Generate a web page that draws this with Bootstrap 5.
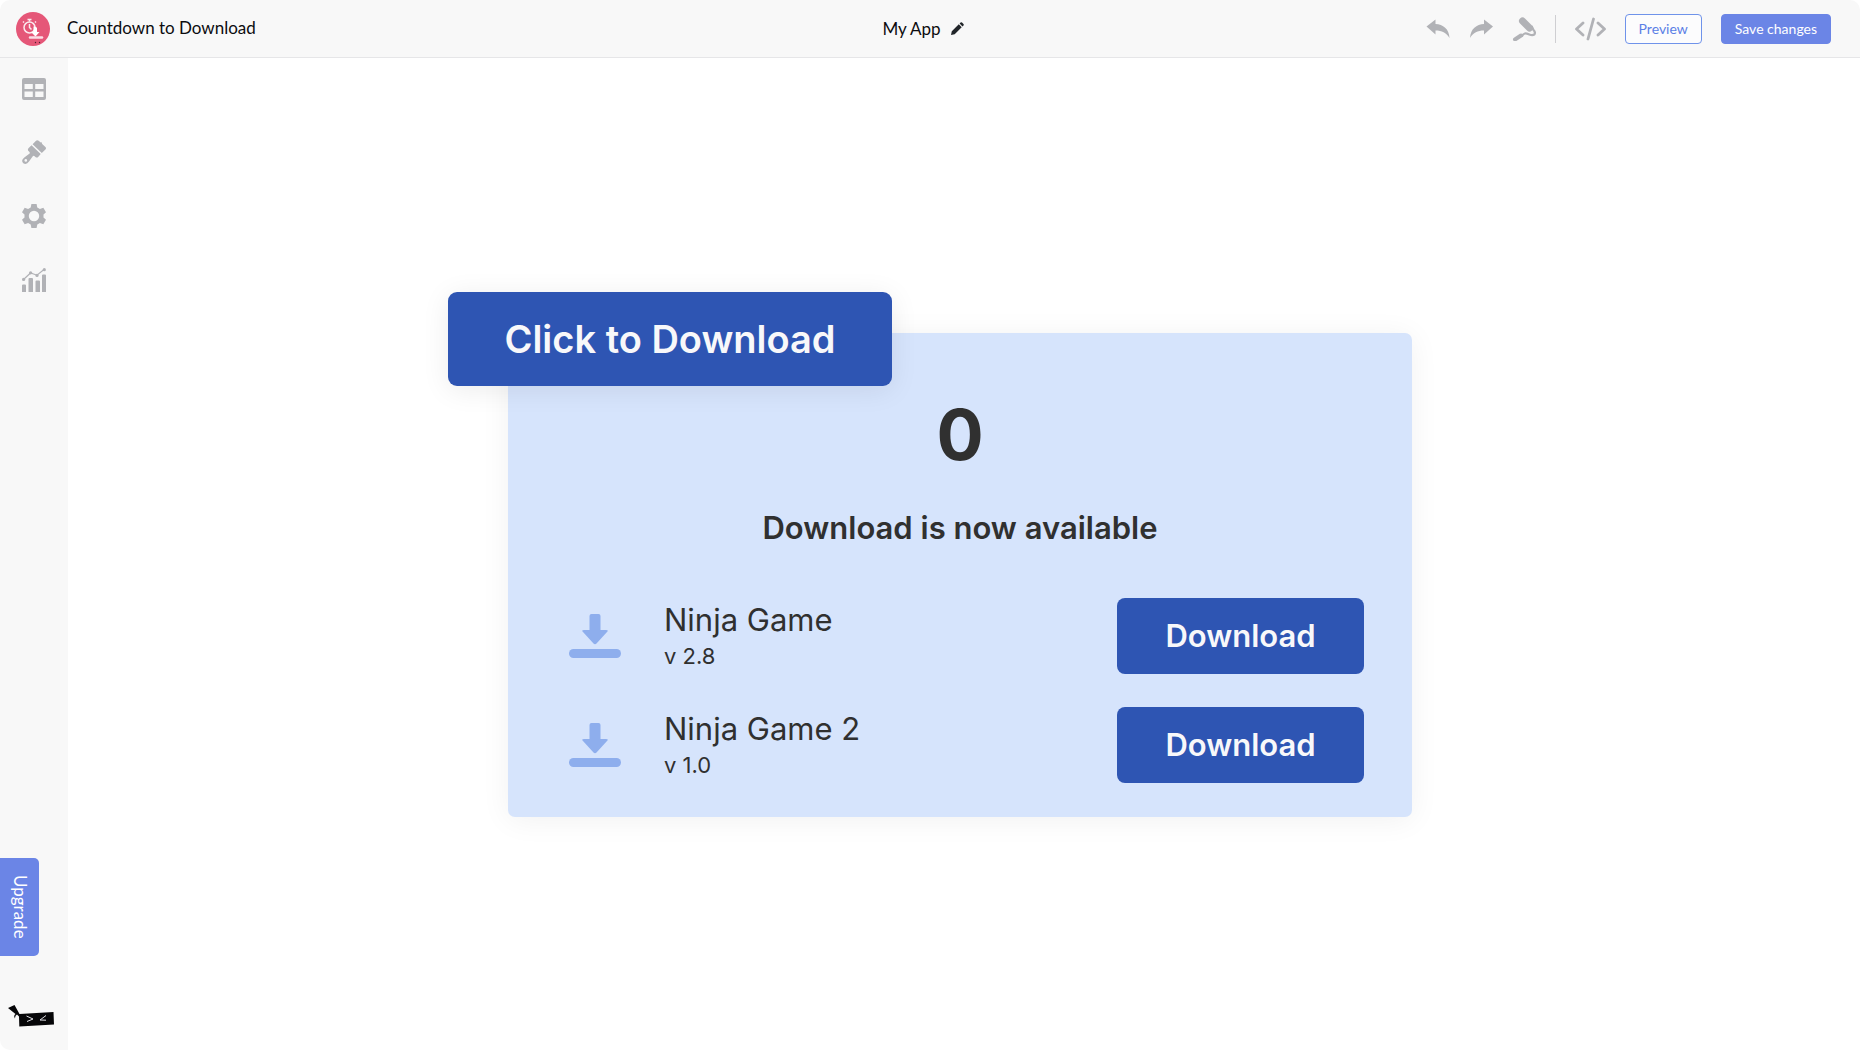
<!DOCTYPE html>
<html lang="en">
<head>
<meta charset="utf-8">
<meta name="viewport" content="width=device-width, initial-scale=1">
<title>Countdown to Download</title>
<link href="https://cdn.jsdelivr.net/npm/bootstrap@5.3.0/dist/css/bootstrap.min.css" rel="stylesheet">
<style>
  body { font-family: Lato, "Liberation Sans", sans-serif; color: #0c0c0f; background: #fff; }
  .editor { border-radius: 10px; overflow: hidden; }
  .topbar { background: #f8f8f8; border-bottom: 1px solid #e6e6e8; height: 58px; padding: 0 16px; }
  .topbar-side { flex: 1 1 0; }
  .tools { gap: 19px; padding-right: 13px; }
  .brand-text, .app-name { font-size: 17px; line-height: 24px; }
  .brand-text { margin-left: 17px; padding-bottom: 2px; }
  .app-name { padding-top: 1px; }
  .tool-btn { border: 0; background: none; padding: 0; color: #b1b2b6; line-height: 0; }
  .tool-btn svg { display: block; }
  .tool-line { width: 1px; height: 28px; background: #cfcfd2; }
  .top-action { --bs-btn-font-size: 14px; --bs-btn-line-height: 20px; --bs-btn-padding-y: 4px; --bs-btn-border-radius: 4px;
    --bs-btn-color: #5b7fe6; --bs-btn-border-color: #6f93ea; --bs-btn-bg: #fcfcfd; --bs-btn-hover-bg: #eef2fd; --bs-btn-hover-color: #5b7fe6; --bs-btn-padding-x: 13px; }
  .top-action-fill { --bs-btn-color: #fff; --bs-btn-bg: #6b85e6; --bs-btn-border-color: #6b85e6; --bs-btn-hover-bg: #5b76dc; --bs-btn-hover-color: #fff; }
  .sidebar { width: 68px; background: #f8f8f8; padding-top: 18px; }
  .upgrade { border: 0; background: #6b85e6; color: #fff; writing-mode: vertical-rl; font-size: 17px; line-height: 38px; padding: 17px 0; width: 39px; border-radius: 0 5px 5px 0; }
  .side-foot { gap: 49px; padding-bottom: 21px; }
  .stage { padding: 0 68px 0 0; }
  .widget { font-family: Inter, "Liberation Sans", sans-serif; width: 964px; max-width: 100%; color: #303030; }
  .cta { background: #2e55b3; color: #f8f8fa; border: 0; border-radius: 9px; width: 444px; height: 94px; font-size: 38px; font-weight: 600; line-height: 48px; box-shadow: 0 4px 28px rgba(0,0,0,.08); position: relative; z-index: 1; }
  .panel { background: #d6e4fc; border-radius: 7px; margin: -53px 0 0 60px; padding: 62px 48px 34px; box-shadow: 0 3px 30px rgba(0,0,0,.06); }
  .count { font-size: 70px; line-height: 80px; font-weight: 700; }
  .status { font-size: 31px; line-height: 40px; font-weight: 600; margin: 33px 0 50px; }
  .items { gap: 33px; padding-left: 13px; }
  .item-icon { margin-right: 43px; }
  .item-text { padding-top: 3px; }
  .item-name { font-size: 31px; line-height: 38px; font-weight: 400; }
  .item-ver { font-size: 22px; line-height: 35px; }
  .get { background: #2e55b3; color: #f8f8fa; border: 0; border-radius: 8px; width: 247px; height: 76px; font-size: 31px; font-weight: 600; line-height: 40px; }
</style>
</head>
<body>
<div class="editor d-flex flex-column min-vh-100">
  <header class="topbar d-flex align-items-center">
    <div class="topbar-side d-flex align-items-center">
      <svg width="34" height="34" viewBox="0 0 34 34" aria-hidden="true">
        <circle cx="17" cy="17" r="17" fill="#e55778"/>
        <g fill="none" stroke="#fbe9ee" stroke-width="1.5">
          <circle cx="13.500" cy="15.500" r="5.500"/>
          <path d="M13.500 9.500V7.500M11.500 7.500h4M8 10.500L7 9.500M19 10.500l1-1M13.500 12v3.500l2 2"/>
        </g>
        <path d="M17.500 14.500q2.800-.5 3.500 1.500v4h2.500l-4 4.500-4.500-4.500h2.500z" fill="#fff"/>
        <path d="M14 25.500h12" stroke="#fbdde5" stroke-width="2.500" stroke-linecap="round"/>
        <circle cx="19.500" cy="30.500" r=".7" fill="#4b2130"/><circle cx="23.500" cy="30.500" r=".7" fill="#4b2130"/>
      </svg>
      <span class="brand-text">Countdown to Download</span>
    </div>
    <div class="app-name d-flex align-items-center gap-2">
      <span>My App</span>
      <button class="tool-btn text-dark" type="button" aria-label="Rename app">
        <svg width="16" height="16" viewBox="0 0 16 16" fill="currentColor"><path d="M2 14l.8-3.700 7-7 2.900 2.900-7 7zM10.600 2.500l1-1a1 1 0 0 1 1.400 0l1.500 1.500a1 1 0 0 1 0 1.400l-1 1z"/></svg>
      </button>
    </div>
    <div class="topbar-side tools d-flex align-items-center justify-content-end">
      <button class="tool-btn" type="button" aria-label="Undo">
        <svg width="24" height="20" viewBox="0 0 24 20" fill="currentColor"><path d="M.5 7.500L9.500.500V5C17 5.500 23 9.500 23.500 19 20 13.500 16 11.500 9.500 11.500V15.500z"/></svg>
      </button>
      <button class="tool-btn" type="button" aria-label="Redo">
        <svg width="24" height="20" viewBox="0 0 24 20" fill="currentColor"><path d="M24 7.500L15 .5V5C7.500 5.500 1.500 9.500 1 19 4.500 13.500 8.500 11.500 15 11.500V15.500z"/></svg>
      </button>
      <button class="tool-btn" type="button" aria-label="Style">
        <svg width="24" height="24" viewBox="0 0 24 24" fill="none" stroke="currentColor"><path d="M10.500 4l7 7" stroke-width="7" stroke-linecap="round"/><path d="M19.500 9l2 4q2.300 2.400.8 4.500-1.800 1.200-5 0-3-1.200-4.500-1-1.800.3-3 3.200" stroke-width="2.200"/><path d="M9 18.500l-6 4" stroke-width="4" stroke-linecap="round"/></svg>
      </button>
      <span class="tool-line"></span>
      <button class="tool-btn" type="button" aria-label="Code">
        <svg width="31" height="24" viewBox="0 0 31 24" fill="none" stroke="currentColor" stroke-width="2.800" stroke-linecap="round" stroke-linejoin="round"><path d="M8 6l-6.500 6L8 18M18.500 2l-5.500 20M23 6l6.500 6-6.500 6"/></svg>
      </button>
      <button class="btn top-action" type="button">Preview</button>
      <button class="btn top-action top-action-fill" type="button">Save changes</button>
    </div>
  </header>
  <div class="d-flex flex-grow-1">
    <nav class="sidebar d-flex flex-column justify-content-between" aria-label="Editor">
      <div class="d-flex flex-column align-items-center gap-4">
        <button class="tool-btn mb-3" type="button" aria-label="Content">
          <svg width="24" height="24" viewBox="0 0 24 24" fill="currentColor" fill-rule="evenodd"><path d="M2 2h20a2 2 0 0 1 2 2v18a2 2 0 0 1-2 2H2a2 2 0 0 1-2-2V4a2 2 0 0 1 2-2zM2.500 8v5h8.300V8zm10.700 0v5h8.300V8zM2.500 15.500v5.500h8.300v-5.500zm10.700 0v5.500h8.300v-5.500z"/></svg>
        </button>
        <button class="tool-btn mb-3" type="button" aria-label="Design">
          <svg width="24" height="24" viewBox="0 0 24 24" fill="currentColor"><path d="M10.600 4.200L14 .8q1.300-1.300 2.700 0l1.400 1.300q.7.600 1.300 0l.8 1.800 3.200 3q1.200 1.200 0 2.500l-3.600 3.600z"/><path d="M9.500 5.300l9.200 8.700-2.300 2.700q-1.500 1.600-3 .2l-.8-.7q-1-.8-1.800.1l-3.800 5.200q-2.500 3.800-5.700 1.800-2.800-3 1-5.800l5-3.700q.9-.7.200-1.700l-1-1q-1.300-1.500.2-3z"/><circle cx="3.800" cy="20.400" r="1.300" fill="#f8f8f8"/></svg>
        </button>
        <button class="tool-btn mb-3" type="button" aria-label="Settings">
          <svg width="24" height="24" viewBox="0 0 24 24" fill="currentColor" fill-rule="evenodd"><path d="M9.400 0h5.200l.7 3.400 2.600 1.500 3.400-1.200L24 8.200l-2.500 2.300v3L24 15.800l-2.700 4.500-3.400-1.200-2.600 1.500-.7 3.400H9.400l-.7-3.400-2.600-1.500-3.400 1.200L0 15.800l2.500-2.300v-3L0 8.200l2.700-4.500 3.400 1.200 2.600-1.500zM12 6.800a5.200 5.200 0 1 0 0 10.400 5.200 5.200 0 0 0 0-10.400z"/></svg>
        </button>
        <button class="tool-btn" type="button" aria-label="Statistics">
          <svg width="24" height="24" viewBox="0 0 24 24" fill="currentColor"><path d="M0 17.500q0-1 1-1h2q1 0 1 1V24H0zM6.500 11q0-1 1-1h2.500q1 0 1 1v13h-4.500zM13.500 13.500q0-1 1-1h2.500q1 0 1 1V24h-4.500zM20 7.500q0-1 1-1h2q1 0 1 1V24h-4z"/><path d="M1.500 11.500L8.500 5l6.500 2.200L22 1.500" fill="none" stroke="currentColor" stroke-width="1.200"/><circle cx="1.600" cy="11.400" r="1.600"/><circle cx="8.600" cy="4.800" r="1.600"/><circle cx="15" cy="7.400" r="1.600"/><circle cx="22.300" cy="1.700" r="1.600"/></svg>
        </button>
      </div>
      <div class="side-foot d-flex flex-column align-items-start">
        <button class="upgrade" type="button">Upgrade</button>
        <svg class="ms-2" width="48" height="24" viewBox="0 0 48 24" aria-hidden="true"><path d="M0 3l6.500-3 5 9L45.500 7 46 19.500l-34.700 2L11 11.500 9 9.500q-2 1-2 4-1.800-3 .5-4.500z" fill="#060608"/><path d="M18.500 11l6.500 3-6 2.500M38 10.500l-6 4.500 6 .2" fill="none" stroke="#dedee4" stroke-width="1"/></svg>
      </div>
    </nav>
    <main class="stage flex-grow-1 d-flex align-items-center justify-content-center">
      <section class="widget">
        <button class="cta d-block" type="button">Click to Download</button>
        <div class="panel">
          <div class="count text-center">0</div>
          <h1 class="status text-center">Download is now available</h1>
          <div class="items d-flex flex-column">
            <div class="d-flex align-items-center">
              <svg class="item-icon" width="52" height="44" viewBox="0 0 52 44" fill="#8eaeed" aria-hidden="true"><path d="M22.500 0h7q2 0 2 2v14H37q3 0 1 2L27.500 29.500q-1.500 1.500-3 0L14 18q-2-2 1-2h5.500V2q0-2 2-2z"/><rect y="35" width="52" height="9" rx="4.500"/></svg>
              <div class="item-text flex-grow-1">
                <h2 class="item-name mb-0">Ninja Game</h2>
                <div class="item-ver">v 2.8</div>
              </div>
              <button class="get" type="button">Download</button>
            </div>
            <div class="d-flex align-items-center">
              <svg class="item-icon" width="52" height="44" viewBox="0 0 52 44" fill="#8eaeed" aria-hidden="true"><path d="M22.500 0h7q2 0 2 2v14H37q3 0 1 2L27.500 29.500q-1.500 1.500-3 0L14 18q-2-2 1-2h5.500V2q0-2 2-2z"/><rect y="35" width="52" height="9" rx="4.500"/></svg>
              <div class="item-text flex-grow-1">
                <h2 class="item-name mb-0">Ninja Game 2</h2>
                <div class="item-ver">v 1.0</div>
              </div>
              <button class="get" type="button">Download</button>
            </div>
          </div>
        </div>
      </section>
    </main>
  </div>
</div>
<script src="https://cdn.jsdelivr.net/npm/bootstrap@5.3.0/dist/js/bootstrap.bundle.min.js"></script>
</body>
</html>
